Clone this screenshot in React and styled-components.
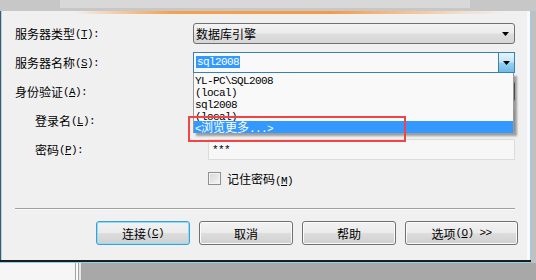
import React from 'react';
import styled, { createGlobalStyle } from 'styled-components';

const Global = createGlobalStyle`
  html, body { margin: 0; padding: 0; }
  body {
    width: 536px; height: 280px; overflow: hidden; background: #c2c2c2;
    font-family: "Noto Sans CJK SC", "Liberation Sans", sans-serif;
    font-size: 12px; color: #000;
  }
`;

const Screen = styled.div`
  width: 536px; height: 280px; display: flex; flex-direction: column; background: #c2c2c2;
`;
const TopBand = styled.div`
  height: 11px; flex: none; background: #c7c7c7; display: flex;
`;
const TopTab = styled.div`
  margin-left: 60px; width: 410px; height: 8px; background: #d8d8d8;
`;
const Middle = styled.div`
  height: 252px; flex: none; display: flex;
`;
const RightStrip = styled.div`
  flex: 1; background: #c0c0c0;
`;
const Dialog = styled.div`
  position: relative; width: 531px; height: 252px; flex: none; box-sizing: border-box;
  background: #f0f0f0; display: flex; flex-direction: column;
  box-shadow:
    inset 0 -1px 0 #8fd0ee,
    inset 0 -3px 0 #1c1c1c,
    inset 1px 0 0 #4a5560,
    inset 2px 0 0 #a8d8ef,
    inset -1px 0 0 #8fd0ee,
    inset -4px 0 0 #fafafa;
`;
const OrangeLine = styled.div`
  height: 3px; flex: none;
  background: linear-gradient(90deg, rgba(246,160,80,0) 14%, #f6a14f 32%, #f59a45 62%, rgba(246,160,80,0.25) 86%, rgba(246,160,80,0) 95%);
`;
const Form = styled.div`
  display: grid; grid-template-columns: 178px 322px; grid-auto-rows: 21px; row-gap: 8px;
  padding: 9px 0 0 15px;
`;
const Label = styled.div`
  display: flex; align-items: center; padding-left: ${p => (p.$indent ? 20 : 0)}px; white-space: nowrap;
`;
const Mono = styled.span`
  font-family: "Liberation Mono", monospace; font-size: 11px; letter-spacing: -0.6px;
`;
const Key = styled.span`
  text-decoration: underline; text-underline-offset: 1px;
`;
const Combo = styled.div`
  position: relative; box-sizing: border-box; height: 21px; border: 1px solid #707070; border-radius: 3px;
  background: linear-gradient(#f3f3f3 0%, #ececec 48%, #dedede 52%, #d6d6d6 100%);
  display: flex; align-items: center; padding-left: 2px;
`;
const ArrowBox = styled.div`
  position: absolute; right: 0; top: 0; bottom: 0; width: 17px;
  display: flex; align-items: center; justify-content: center;
`;
const EditCombo = styled.div`
  position: relative; box-sizing: border-box; height: 21px; border: 1px solid #3c7fb1;
  background: #f9f9f9; display: flex; align-items: center; padding-left: 2px;
`;
const DropButton = styled.div`
  position: absolute; right: -1px; top: -1px; bottom: -1px; width: 17px; box-sizing: border-box;
  border: 1px solid #3c7fb1; border-radius: 1px;
  background: linear-gradient(#e5f4fd 0%, #c4e5f8 48%, #98d0f1 52%, #6fbbe8 100%);
  display: flex; align-items: center; justify-content: center;
`;
const Selected = styled.span`
  background: #3399ff; color: #fff; line-height: 13px; padding: 0 1px;
`;
const TextField = styled.div`
  box-sizing: border-box; height: 21px; margin-left: 15px; border: 1px solid #dcdcdc;
  background: #f7f7f7; display: flex; align-items: center; padding-left: 3px;
`;
const CheckRow = styled.div`
  display: flex; align-items: center; gap: 6px; margin: 12px 0 0 208px; height: 13px;
`;
const CheckBox = styled.div`
  width: 13px; height: 13px; box-sizing: border-box; border: 1px solid #8e8f8f;
  background: linear-gradient(135deg, #d6d6d6, #f6f6f6);
  box-shadow: inset 0 0 0 1px #f4f4f4;
`;
const Separator = styled.div`
  margin: 23px 16px 0 15px; height: 1px; background: #a0a0a0; box-shadow: 0 1px 0 #fbfbfb;
`;
const ButtonRow = styled.div`
  display: flex; justify-content: flex-end; gap: 9px; margin-top: 12px; padding-right: 13px;
`;
const Button = styled.div`
  box-sizing: border-box; width: ${p => p.$w}px; height: 24px; border-radius: 3px;
  border: 1px solid ${p => (p.$default ? '#3c9fd8' : '#707070')};
  background: linear-gradient(#f2f2f2 0%, #ebebeb 48%, #dddddd 52%, #cfcfcf 100%);
  box-shadow: inset 0 0 0 1px ${p => (p.$default ? '#8fdcf7' : '#fbfbfb')};
  display: flex; align-items: center; justify-content: center; white-space: nowrap;
`;
const ListBox = styled.div`
  position: absolute; left: 193px; top: 62px; width: 321px; height: 60px; box-sizing: border-box;
  border: 1px solid #9a9a9a; border-top: none; background: #f9f9f9;
  box-shadow: 3px 3px 2px rgba(0, 0, 0, 0.35);
  display: flex; flex-direction: column;
`;
const ListItem = styled.div`
  height: 12px; flex: none; line-height: 12px; padding-left: 1px; white-space: nowrap;
  background: ${p => (p.$active ? '#3399ff' : 'transparent')};
  color: ${p => (p.$active ? '#fff' : '#000')};
`;
const RedBox = styled.div`
  position: absolute; left: 188px; top: 105px; width: 218px; height: 26px; box-sizing: border-box;
  border: 2px solid #f04545;
`;
const BottomStrip = styled.div`
  flex: 1; display: flex;
`;
const WhitePanel = styled.div`
  width: 75px; background: #f6f6f6;
`;
const Splitter = styled.div`
  width: 7px; box-sizing: border-box; border-left: 1px solid #a4a4a4; border-right: 1px solid #a4a4a4;
  background: linear-gradient(90deg, #fbfbfb 0 2px, #a4a4a4 2px 3px, #e8e8e8 3px);
`;
const GrayArea = styled.div`
  flex: 1; background: #a8a8a8;
`;

const Arrow = () => (
  <svg width="7" height="4" viewBox="0 0 7 4"><path d="M0 0H7L3.5 4Z" fill="#000" /></svg>
);

const M = ({ k, colon = true }) => (
  <Mono>(<Key>{k}</Key>){colon ? ':' : ''}</Mono>
);

export default function App() {
  return (
    <>
      <Global />
      <Screen>
        <TopBand><TopTab /></TopBand>
        <Middle>
          <Dialog>
            <OrangeLine />
            <Form>
              <Label>服务器类型<M k="T" /></Label>
              <Combo>数据库引擎<ArrowBox><Arrow /></ArrowBox></Combo>

              <Label>服务器名称<M k="S" /></Label>
              <EditCombo>
                <Mono><Selected>sql2008</Selected></Mono>
                <DropButton><Arrow /></DropButton>
              </EditCombo>

              <Label>身份验证<M k="A" /></Label>
              <Combo><ArrowBox><Arrow /></ArrowBox></Combo>

              <Label $indent>登录名<M k="L" /></Label>
              <TextField />

              <Label $indent>密码<M k="P" /></Label>
              <TextField><Mono>***</Mono></TextField>
            </Form>
            <CheckRow>
              <CheckBox />
              <span>记住密码<M k="M" colon={false} /></span>
            </CheckRow>
            <Separator />
            <ButtonRow>
              <Button $w={94} $default>连接<M k="C" colon={false} /></Button>
              <Button $w={94}>取消</Button>
              <Button $w={94}>帮助</Button>
              <Button $w={113}>选项<M k="O" colon={false} /><Mono>&nbsp;&gt;&gt;</Mono></Button>
            </ButtonRow>
            <ListBox>
              <ListItem><Mono>YL-PC\SQL2008</Mono></ListItem>
              <ListItem><Mono>(local)</Mono></ListItem>
              <ListItem><Mono>sql2008</Mono></ListItem>
              <ListItem><Mono>(local)</Mono></ListItem>
              <ListItem $active><Mono>&lt;</Mono>浏览更多<Mono>...&gt;</Mono></ListItem>
            </ListBox>
            <RedBox />
          </Dialog>
          <RightStrip />
        </Middle>
        <BottomStrip>
          <WhitePanel />
          <Splitter />
          <GrayArea />
        </BottomStrip>
      </Screen>
    </>
  );
}
